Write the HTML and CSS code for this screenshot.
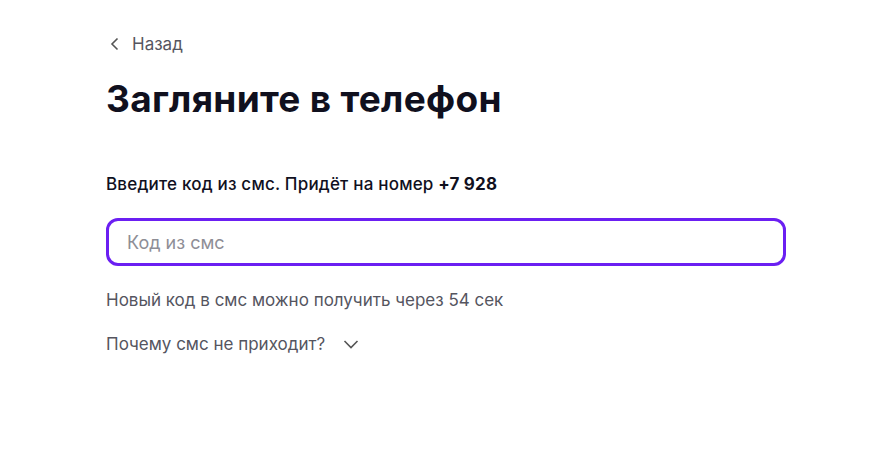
FILE: index.html
```html
<!DOCTYPE html>
<html lang="ru">
<head>
  <meta charset="UTF-8">
  <title>Загляните в телефон</title>
  <link rel="stylesheet" href="styles.css">
</head>
<body>
  <div class="page">
    <!-- назад -->
    <a href="#" class="back">
      <svg width="10" height="14" viewBox="0 0 10 14"><path d="M7.5 1.5 L2 7 L7.5 12.5" fill="none" stroke="#555" stroke-width="1.6"/></svg>
      <span>Назад</span>
    </a>

    <h1>Загляните в телефон</h1>

    <p class="hint">Введите код из смс. Придёт на номер <b>+7 928</b></p>

    <input type="text" class="code-input" placeholder="Код из смс">

    <p class="timer">Новый код в смс можно получить через 54 сек</p>

    <div class="why">
      <span>Почему смс не приходит?</span>
      <svg width="16" height="10" viewBox="0 0 16 10"><path d="M1.5 2 L8 8.5 L14.5 2" fill="none" stroke="#555" stroke-width="1.6"/></svg>
    </div>
  </div>
</body>
</html>
```

FILE: styles.css
```css
body {
  margin: 0;
  padding: 0;
  font-family: Inter, "Noto Sans", sans-serif;
  background: #fff;
  color: #10101e;
}
.page {
  padding: 33px 0 0 106px;
  width: 680px;
}
.back {
  display: flex;
  align-items: center;
  gap: 12px;
  padding-left: 4px;
  text-decoration: none;
  color: #555560;
  font-size: 17px;
  line-height: 22px;
}
h1 {
  margin: 22px 0 0;
  font-size: 37px;
  line-height: 44px;
  font-weight: 700;
  letter-spacing: 0.3px;
}
.hint {
  margin: 52px 0 0;
  font-size: 17px;
  line-height: 22px;
  font-weight: 500;
  letter-spacing: 0.2px;
}
.hint b {
  font-weight: 700;
}
.code-input {
  display: block;
  margin-top: 23px;
  width: 100%;
  height: 48px;
  box-sizing: border-box;
  border: 3px solid #6b1ff2;
  border-radius: 12px;
  padding: 0 18px;
  font-family: inherit;
  font-size: 18px;
  color: #10101e;
  outline: none;
}
.code-input::placeholder {
  color: #8e8e96;
}
.timer {
  margin: 23px 0 0;
  font-size: 17px;
  line-height: 22px;
  color: #55555f;
}
.why {
  display: flex;
  align-items: center;
  gap: 18px;
  margin-top: 22px;
  font-size: 17px;
  line-height: 22px;
  color: #55555f;
}
```
